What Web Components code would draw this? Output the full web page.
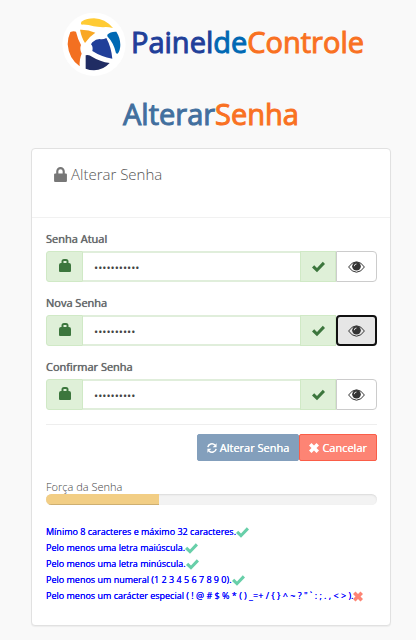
<!DOCTYPE html>
<html lang="pt-BR">
<head>
<meta charset="utf-8">
<meta name="viewport" content="width=device-width, initial-scale=1">
<title>Painel de Controle - Alterar Senha</title>
<style>
body{margin:0;background:#f9f9f9;color:#676a6c;font:11px/16px "Open Sans","Noto Sans",sans-serif}
</style>
</head>
<body>
<password-page></password-page>
<script>
const icons={
 lock:['0 0 12 14','<path d="M2 6V4a4 4 0 0 1 8 0v2h1q1 0 1 1v6q0 1-1 1H1q-1 0-1-1V7q0-1 1-1zM4 6h4V4a2 2 0 0 0-4 0z"/>'],
 bag:['0 0 12 13','<path fill-rule="evenodd" d="M2.500 4V2.500Q2.500 0 5 0h2q2.500 0 2.500 2.500V4H10q2 0 2 2v6q0 1-1 1H1q-1 0-1-1V6q0-2 2-2zM4.500 4h3V2h-3z"/>'],
 check:['0 0 13 11','<path d="M0 6l2.200-2.200L5 6.500 10.800.3 13 2.500 5 10.800z"/>'],
 cross:['0 0 12 12','<path d="M0 3l3-3 3 3 3-3 3 3-3 3 3 3-3 3-3-3-3 3-3-3 3-3z"/>'],
 eye:['0 0 17 12','<path d="M.6 6Q4 .8 8.500 .8T16.400 6Q13 11.200 8.500 11.200T.6 6z" fill="none" stroke="currentColor" stroke-width="1"/><circle cx="8.500" cy="5.300" r="4.300"/><path d="M6.300 5.200Q6.300 3 8.500 3" fill="none" stroke="#fff" stroke-width=".8"/>'],
 refresh:['0 0 12 12','<path d="M1 5A5 5 0 0 1 9.500 2.500M11 7A5 5 0 0 1 2.500 9.500" fill="none" stroke="currentColor" stroke-width="1.800"/><path d="M11.500 .3V5H6.800zM.5 11.700V7h4.700z"/>']
};
const define=(name,render)=>customElements.define(name,class extends HTMLElement{
 constructor(){super();this.attachShadow({mode:'open'})}
 connectedCallback(){this.shadowRoot.innerHTML=render(this)}
});

define('ui-icon',el=>{
 const [box,art]=icons[el.getAttribute('name')];
 return `<style>:host{display:inline-block;width:var(--icon-w,13px);height:var(--icon-h,12px);flex:none}svg{display:block;width:100%;height:100%;fill:currentColor}</style><svg viewBox="${box}" aria-hidden="true">${art}</svg>`;
});

define('brand-logo',()=>`<style>
:host{display:flex;justify-content:center;align-items:center;gap:5px;padding-left:4px;font-size:29px;line-height:40px;color:#213f99}
svg{width:64px;height:64px;flex:none}
div{margin-bottom:4px;-webkit-text-stroke:1px}
.de{color:#0069b4}.controle{color:#f97122}
</style>
<svg viewBox="25 20 192 192" role="img" aria-label="Logotipo">
<circle cx="121" cy="117" r="95" fill="#fff"/>
<path fill="#ffcb34" d="M83 49Q100 39 121 39Q154 40 178 68Q158 63 148 66Q130 65 120 63Q102 57 84 58Q80 55 83 49z"/>
<path fill="#f9a825" d="M79 73Q103 72 125 82Q106 94 94 113Q84 98 79 73z"/>
<path fill="#f37021" d="M50 80Q60 76 67 79Q72 101 82 119Q77 131 84 145Q77 160 78 183Q45 160 42 117Q42 98 50 80z"/>
<path fill="#213f99" d="M116 111Q127 101 138 101Q148 103 158 98Q173 126 176 160Q142 154 116 137Q119 124 112 117z"/>
<path fill="#0069b4" d="M161 88Q170 78 188 79Q200 98 200 118Q200 135 192 145L187 144Q181 114 161 93z"/>
<path fill="#202c63" d="M96 150Q106 147 115 154Q139 169 168 173Q148 195 121 195Q108 195 96 190z"/>
</svg><div>Painel<span class="de">de</span><span class="controle">Controle</span></div>`);

define('password-field',el=>`<style>
:host{display:block}
label{display:block;text-shadow:0 0 0 currentColor,0 0 1px #676a6c80;line-height:16px;margin-bottom:4px}
.row{display:flex;height:31px}
.addon{box-sizing:border-box;display:flex;align-items:center;justify-content:center;width:36px;background:#dff0d8;border:1px solid #d0e9c6;color:#3c763d;flex:none}
.first{width:37px;border-radius:3px 0 0 3px;--icon-w:12px;--icon-h:13px}
.first ui-icon{margin-bottom:2px}
input{flex:1;min-width:0;box-sizing:border-box;border:solid #e0eedb;border-width:2px 0;margin:0;padding:2px 11px 0;font:inherit;color:#444;background:#fff;outline:0}
button{box-sizing:border-box;width:41px;border:1px solid #ccc;border-radius:0 4px 4px 0;background:#fff;color:#333;padding:0;display:flex;align-items:center;justify-content:center;--icon-w:17px;--icon-h:12px}
:host([active]) button{background:#e6e6e6;border:2px solid #111;border-radius:4px}
</style>
<label for="pw">${el.getAttribute('label')}</label>
<div class="row"><span class="addon first"><ui-icon name="bag"></ui-icon></span><input id="pw" type="password" value="${'x'.repeat(+el.getAttribute('length'))}"><span class="addon"><ui-icon name="check"></ui-icon></span><button type="button" aria-label="Mostrar senha"><ui-icon name="eye"></ui-icon></button></div>`);

define('action-button',()=>`<style>
:host{display:block;--icon-w:10px;--icon-h:10px}
button{display:flex;align-items:center;gap:3px;font:inherit;line-height:17px;color:#fff;text-shadow:0 0 0 #fff;padding:4px 9px;border:1px solid #839fbc;background:#839fbc;border-radius:2px}
:host([danger]) button{background:#fd8474;border-color:#fa5d48}
</style><button type="button"><slot></slot></button>`);

define('strength-meter',()=>`<style>
:host{display:block}
.track{height:11px;border-radius:6px;background:#f3f3f3;overflow:hidden;box-shadow:inset 0 1px 2px #0000001a}
.bar{width:34%;height:100%;background:#f2ce85;box-shadow:inset 0 -1px 0 #00000026}
#name{line-height:14px;font-weight:300;color:#444}
</style><div id="name"><slot></slot></div><div class="track" role="progressbar" aria-labelledby="name" aria-valuenow="34" aria-valuemin="0" aria-valuemax="100"><div class="bar"></div></div>`);

define('rule-item',el=>`<style>
:host{display:flex;align-items:center;line-height:16px;white-space:nowrap;color:#00f;font-size:9px;text-shadow:0 0 0 #00f}
ui-icon{color:#68cfa9;--icon-w:13px;--icon-h:11px}
:host([failed]) ui-icon{color:#fd8474;--icon-w:10px}
</style><slot></slot><ui-icon name="${el.hasAttribute('failed')?'cross':'check'}"></ui-icon>`);

define('form-card',()=>`<style>
:host{display:block;background:#fff;border:1px solid #e1e1e1;border-radius:4px;box-shadow:0 1px 1px #0000000d}
header{border-bottom:1px solid #f1f1f1;padding:16px 22px 33px}
.body{padding:13px 13px 21px 14px}
</style><header><slot name="title"></slot></header><div class="body"><slot></slot></div>`);

define('password-page',()=>`<style>
:host{display:block;padding:12px 25px 14px 31px}
h1{margin:18px 0 14px;font-size:29px;line-height:40px;font-weight:400;-webkit-text-stroke:1px;color:#426f9e;text-align:center}
h1 span{color:#f97122}
h2{margin:0;font-size:15px;line-height:19px;font-weight:300;color:#555;display:flex;align-items:center;gap:4px;--icon-w:13px;--icon-h:15px}
h2 ui-icon{color:#777}
.fields{display:grid;gap:13px}
hr{border:0;border-top:1px solid #eee;margin:14px 0 9px}
.actions{display:flex;justify-content:flex-end}
strength-meter{margin:19px 0}
</style>
<brand-logo></brand-logo>
<h1>Alterar<span>Senha</span></h1>
<form-card>
<h2 slot="title"><ui-icon name="lock"></ui-icon>Alterar Senha</h2>
<div class="fields">
<password-field label="Senha Atual" length="11"></password-field>
<password-field label="Nova Senha" length="10" active></password-field>
<password-field label="Confirmar Senha" length="10"></password-field>
</div>
<hr>
<div class="actions"><action-button><ui-icon name="refresh"></ui-icon>Alterar Senha</action-button><action-button danger><ui-icon name="cross"></ui-icon>Cancelar</action-button></div>
<strength-meter>Força da Senha</strength-meter>
<rule-item>Mínimo 8 caracteres e máximo 32 caracteres.</rule-item>
<rule-item>Pelo menos uma letra maiúscula.</rule-item>
<rule-item>Pelo menos uma letra minúscula.</rule-item>
<rule-item>Pelo menos um numeral (1 2 3 4 5 6 7 8 9 0).</rule-item>
<rule-item failed>Pelo menos um carácter especial ( ! @ # $ % * ( ) _=+ / { } ^ ~ ? " \` : ; . , &lt; &gt; ).</rule-item>
</form-card>`);
</script>
</body>
</html>
